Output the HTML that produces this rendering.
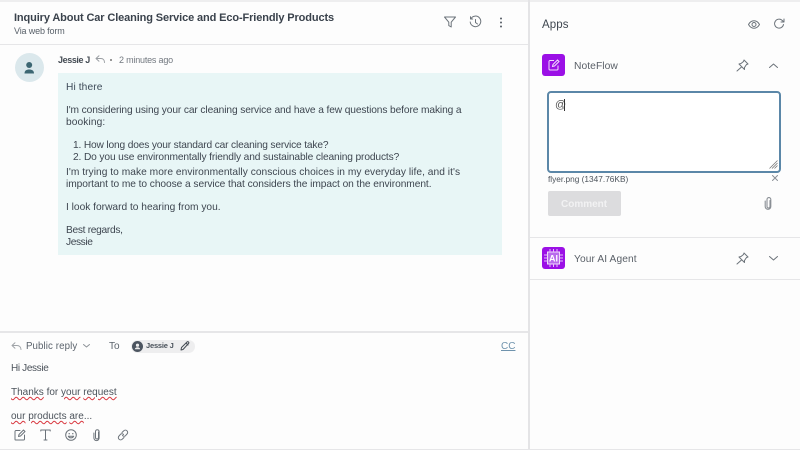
<!DOCTYPE html>
<html><head><meta charset="utf-8">
<style>
html,body{margin:0;padding:0;width:800px;height:450px;overflow:hidden;background:#fdfdfd;font-family:"Liberation Sans",sans-serif;color:#3e4650}
.t{position:absolute;white-space:nowrap;font-size:10.2px;line-height:14px}
.l{position:absolute;background:#e6e6e8}
svg{position:absolute;overflow:visible}
.i{fill:none;stroke:#6c737a;stroke-width:1;stroke-linecap:round;stroke-linejoin:round}
.w{text-decoration:underline wavy #d8343c .8px;text-underline-offset:1px}
</style></head><body>
<!-- frame lines -->
<div class="l" style="left:0;top:0;width:800px;height:2px;background:#eeeeef"></div>
<div class="l" style="left:0;top:44px;width:528px;height:1px"></div>
<div class="l" style="left:528px;top:0;width:2px;height:450px;background:#e4e4e6"></div>
<div class="l" style="left:0;top:331px;width:528px;height:2px"></div>
<div class="l" style="left:0;top:449px;width:800px;height:1px"></div>
<div class="l" style="left:530px;top:237px;width:270px;height:1px"></div>
<div class="l" style="left:530px;top:279px;width:270px;height:1px"></div>

<!-- header -->
<div class="t" style="left:14px;top:11px;font-size:11px;font-weight:bold;color:#3a424c;letter-spacing:-.12px">Inquiry About Car Cleaning Service and Eco-Friendly Products</div>
<div class="t" style="left:14px;top:24px;font-size:9px;color:#59616a;letter-spacing:-.15px">Via web form</div>
<svg style="left:444px;top:16px" width="12" height="12" viewBox="0 0 12 12"><path class="i" d="M.5 1h11L7.2 6.2V11L4.8 9.6V6.2z"/></svg>
<svg style="left:469px;top:16px" width="13" height="13" viewBox="0 0 13 13"><path class="i" d="M2 2.500A5.300 5.300 0 1 1 1.200 6M1.500.8V3h2.200M6.500 3.500v3l2 1.500"/></svg>
<svg style="left:499px;top:17px" width="4" height="11" viewBox="0 0 4 11"><circle cx="2" cy="1.500" r="1" fill="#555c64"/><circle cx="2" cy="5.500" r="1" fill="#555c64"/><circle cx="2" cy="9.500" r="1" fill="#555c64"/></svg>

<!-- message -->
<svg style="left:15px;top:53px" width="29" height="29" viewBox="0 0 29 29"><circle cx="14.500" cy="14.500" r="14.500" fill="#dbe8ec"/><circle cx="14.200" cy="12" r="3" fill="#3c6672"/><path d="M9.500 20.500c0-3 2-4 4.700-4s4.800 1 4.800 4z" fill="#3c6672"/></svg>
<div class="t" style="left:58px;top:53px;font-size:9px;font-weight:bold;color:#454c54;letter-spacing:-.4px">Jessie J</div>
<svg style="left:95px;top:55px" width="11" height="9" viewBox="0 0 11 9"><path class="i" style="stroke:#9a9ea3" d="M4 .8 1 3.500l3 2.700M1 3.500h5c2 0 3.500 1.500 3.500 4"/></svg>
<div style="position:absolute;left:110px;top:59px;width:2px;height:2px;border-radius:50%;background:#777"></div>
<div class="t" style="left:119px;top:53px;font-size:9px;color:#737980;letter-spacing:-.2px">2 minutes ago</div>

<div style="position:absolute;left:58px;top:73px;width:444px;height:182px;background:#e8f6f6"></div>
<div class="t" style="left:66px;top:81px;color:#3d4a58;letter-spacing:.1px">Hi there</div>
<div class="t" style="left:66px;top:104px;letter-spacing:-.11px">I'm considering using your car cleaning service and have a few questions before making a</div>
<div class="t" style="left:66px;top:116px;letter-spacing:.1px">booking:</div>
<div class="t" style="left:73px;top:139px;letter-spacing:-.16px">1. How long does your standard car cleaning service take?</div>
<div class="t" style="left:73px;top:151px;letter-spacing:-.125px">2. Do you use environmentally friendly and sustainable cleaning products?</div>
<div class="t" style="left:66px;top:166px;letter-spacing:.04px">I'm trying to make more environmentally conscious choices in my everyday life, and it's</div>
<div class="t" style="left:66px;top:178px;letter-spacing:-.06px">important to me to choose a service that considers the impact on the environment.</div>
<div class="t" style="left:66px;top:201px">I look forward to hearing from you.</div>
<div class="t" style="left:66px;top:224px;letter-spacing:-.3px">Best regards,</div>
<div class="t" style="left:66px;top:236px;letter-spacing:-.4px">Jessie</div>

<!-- reply -->
<svg style="left:11px;top:342px" width="12" height="9" viewBox="0 0 12 9"><path class="i" style="stroke:#a0a4a8" d="M4 .8 1 3.500l3 2.700M1 3.500h5c2.200 0 4 1.500 4 4"/></svg>
<div class="t" style="left:26px;top:340px;font-size:9.700px;color:#5b636c;letter-spacing:.1px">Public reply</div>
<svg style="left:83px;top:344px" width="7" height="4" viewBox="0 0 7 4"><path class="i" style="stroke:#8d9298" d="M.5.500 3.500 3l3-2.500"/></svg>
<div class="t" style="left:109px;top:340px;font-size:10px;color:#5b636c">To</div>
<div style="position:absolute;left:131px;top:340px;width:64px;height:13px;border-radius:7px;background:#eeeeef"></div>
<svg style="left:132px;top:341px" width="11" height="11" viewBox="0 0 11 11"><circle cx="5.500" cy="5.500" r="5.500" fill="#4c5560"/><circle cx="5.500" cy="4.200" r="1.600" fill="#eee"/><path d="M2.800 8.300c.3-1.500 1.400-2 2.700-2s2.400.5 2.700 2z" fill="#eee"/></svg>
<div class="t" style="left:146px;top:339px;font-size:7.500px;font-weight:bold;color:#4a525b;letter-spacing:-.2px">Jessie J</div>
<svg style="left:180px;top:341px" width="10" height="10" viewBox="0 0 10 10"><path class="i" style="stroke:#444b53" d="M1 9l.5-2.500L7 1c.5-.5 1-.5 1.500 0s.5 1 0 1.500L3 8.500zM6 2l2 2"/></svg>
<div class="t" style="left:501px;top:340px;font-size:10px;color:#6f93ad;text-decoration:underline">CC</div>

<div class="t" style="left:11px;top:362px;font-size:10px;letter-spacing:-.35px;color:#4c535b">Hi Jessie</div>
<div class="t" style="left:11px;top:386px;font-size:10px;color:#4c535b"><span class="w">Thanks</span> for <span class="w">your</span> <span class="w">request</span></div>
<div class="t" style="left:11px;top:410px;font-size:10px;color:#4c535b"><span class="w">our</span> <span class="w">products</span> <span class="w">are</span>...</div>

<svg style="left:14px;top:429px" width="12" height="12" viewBox="0 0 12 12"><path class="i" d="M6 1.500H2A1 1 0 0 0 1 2.500v8a.5.5 0 0 0 .5.500h8a1 1 0 0 0 1-1V6M4.500 7.500 5 5.500 9.500 1l1.500 1.500L6.500 7z"/></svg>
<svg style="left:40px;top:429px" width="11" height="12" viewBox="0 0 11 12"><path class="i" d="M.8 2V1h9.400v1M5.500 1v10M4 11h3"/></svg>
<svg style="left:65px;top:429px" width="12" height="12" viewBox="0 0 12 12"><circle class="i" cx="6" cy="6" r="5.300"/><circle cx="4.200" cy="4.700" r=".7" fill="#6c737a"/><circle cx="7.800" cy="4.700" r=".7" fill="#6c737a"/><path class="i" d="M3.300 7.200c1 2.200 4.400 2.200 5.400 0z"/></svg>
<svg style="left:93px;top:429px" width="8" height="12" viewBox="0 0 8 12"><path class="i" d="M5.500 3v5.500a1.500 1.500 0 0 1-3 0V2.500a1.800 1.800 0 0 1 3.600 0V9a2.600 2.600 0 0 1-5.200 0V4"/></svg>
<svg style="left:117px;top:429px" width="12" height="12" viewBox="0 0 12 12"><path class="i" d="M5 3.500 6.800 1.800a2.200 2.200 0 0 1 3.200 3.200L8.500 6.700a2.200 2.200 0 0 1-3-.2M7 8.500 5.200 10.200A2.200 2.200 0 0 1 2 7l1.500-1.700a2.200 2.200 0 0 1 3 .2"/></svg>

<!-- apps panel -->
<div class="t" style="left:542px;top:18px;font-size:11.500px;color:#3f4750;letter-spacing:.1px">Apps</div>
<svg style="left:748px;top:20px" width="12" height="9" viewBox="0 0 12 9"><path class="i" d="M.5 4.500C2 1.800 4 .8 6 .8s4 1 5.500 3.700C10 7.200 8 8.200 6 8.200S2 7.200.5 4.500z"/><circle class="i" cx="6" cy="4.500" r="2"/></svg>
<svg style="left:774px;top:18px" width="11" height="11" viewBox="0 0 11 11"><path class="i" d="M9.500 6.500A4.500 4.500 0 1 1 8 2.200L10 4M10 1v3H7"/></svg>

<div style="position:absolute;left:542px;top:54px;width:23px;height:22px;border-radius:3px;background:#9b10e6"></div>
<svg style="left:548px;top:59px" width="12" height="12" viewBox="0 0 12 12"><path fill="none" stroke="#f0dcfb" stroke-width="1" d="M6 1.500H2A1 1 0 0 0 1 2.500v7.500a1 1 0 0 0 1 1h7a1 1 0 0 0 1-1V6.500M4.500 7.500 5 5.500 9.500 1l1.500 1.500L6.500 7z"/></svg>
<div class="t" style="left:574px;top:60px;font-size:10.300px;color:#5a6068;letter-spacing:.05px">NoteFlow</div>
<svg style="left:736px;top:59px" width="13" height="13" viewBox="0 0 13 13"><path class="i" d="M8 1 12 5 10.500 5.500 8.500 8.500 8.500 10.500 3 5 5 4.500 7.500 2.500zM5.500 8 1 12"/></svg>
<svg style="left:769px;top:63px" width="9" height="5" viewBox="0 0 9 5"><path class="i" d="M.5 4.500 4.500 1l4 3.500"/></svg>

<div style="position:absolute;left:547px;top:91px;width:230px;height:78px;border:2px solid #5b87a8;border-radius:4px;background:#fff"></div>
<div class="t" style="left:555px;top:98px;font-size:11px;color:#555">@</div>
<div style="position:absolute;left:564px;top:99px;width:1px;height:12px;background:#333"></div>
<svg style="left:769px;top:160px" width="9" height="9" viewBox="0 0 9 9"><path d="M8.500 .5 .5 8.500M8.500 3 3 8.500M8.500 5.500 5.500 8.500" stroke="#777" stroke-width=".8" fill="none"/></svg>
<div class="t" style="left:548px;top:172px;font-size:8.300px;color:#4d545c">flyer.png (1347.76KB)</div>
<svg style="left:772px;top:175px" width="6" height="6" viewBox="0 0 6 6"><path class="i" style="stroke:#8b9096" d="M.5.500l5 5M5.500.500l-5 5"/></svg>
<div style="position:absolute;left:548px;top:191px;width:73px;height:25px;border-radius:2px;background:#dcdcde"></div>
<div class="t" style="left:561px;top:198px;font-size:10px;font-weight:bold;color:#f2f2f3">Comment</div>
<svg style="left:764px;top:197px" width="9" height="13" viewBox="0 0 9 13"><path class="i" style="stroke:#8a8f95;stroke-width:1.100" d="M6 3.500v6a1.500 1.500 0 0 1-3 0V2.500a1.800 1.800 0 0 1 3.800 0V9.500a2.800 2.800 0 0 1-5.600 0V4"/></svg>

<div style="position:absolute;left:542px;top:247px;width:23px;height:22px;border-radius:3px;background:#9b10e6"></div>
<svg style="left:542px;top:247px" width="23" height="22" viewBox="0 0 23 22"><rect x="5.500" y="5" width="12" height="12" fill="#b96cec" stroke="#f0dcfb" stroke-width="1"/><path d="M8 2v3M11.500 2v3M15 2v3M8 17v3M11.500 17v3M15 17v3M2 8h3.500M2 11h3.500M2 14h3.500M17.500 8h3.500M17.500 11h3.500M17.500 14h3.500" stroke="#e3c2f8" stroke-width="1"/><text x="11.500" y="14.500" font-family="Liberation Sans,sans-serif" font-size="9" font-weight="bold" text-anchor="middle" fill="#fff">AI</text></svg>
<div class="t" style="left:574px;top:253px;font-size:10.200px;color:#5a6068;letter-spacing:.1px">Your AI Agent</div>
<svg style="left:736px;top:252px" width="13" height="13" viewBox="0 0 13 13"><path class="i" d="M8 1 12 5 10.500 5.500 8.500 8.500 8.500 10.500 3 5 5 4.500 7.500 2.500zM5.500 8 1 12"/></svg>
<svg style="left:769px;top:256px" width="9" height="5" viewBox="0 0 9 5"><path class="i" d="M.5.500 4.500 4l4-3.500"/></svg>
</body></html>
